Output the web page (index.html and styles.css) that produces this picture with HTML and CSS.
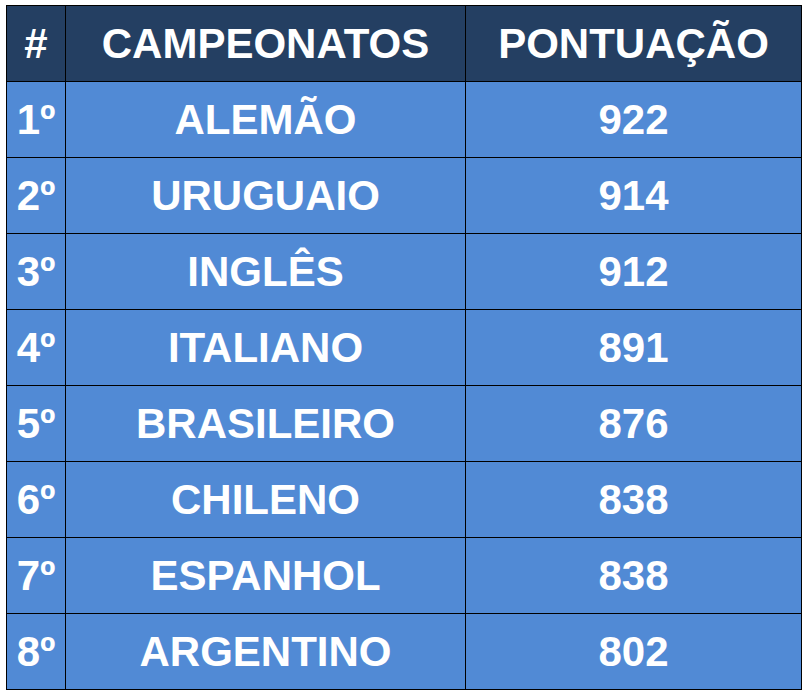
FILE: index.html
```html
<!DOCTYPE html>
<html lang="pt">
<head>
<meta charset="utf-8">
<title>Campeonatos</title>
<link rel="stylesheet" href="styles.css">
</head>
<body>
<table class="ranking">
  <colgroup>
    <col class="c-pos">
    <col class="c-name">
    <col class="c-score">
  </colgroup>
  <thead>
    <tr><th>#</th><th>CAMPEONATOS</th><th>PONTUAÇÃO</th></tr>
  </thead>
  <tbody>
    <tr><td>1º</td><td>ALEMÃO</td><td>922</td></tr>
    <tr><td>2º</td><td>URUGUAIO</td><td>914</td></tr>
    <tr><td>3º</td><td>INGLÊS</td><td>912</td></tr>
    <tr><td>4º</td><td>ITALIANO</td><td>891</td></tr>
    <tr><td>5º</td><td>BRASILEIRO</td><td>876</td></tr>
    <tr><td>6º</td><td>CHILENO</td><td>838</td></tr>
    <tr><td>7º</td><td>ESPANHOL</td><td>838</td></tr>
    <tr><td>8º</td><td>ARGENTINO</td><td>802</td></tr>
  </tbody>
</table>
</body>
</html>
```
FILE: styles.css
```css
html, body {
  margin: 0;
  background: #ffffff;
}
body {
  padding: 5px 0 0 6px;
}
.ranking {
  border-collapse: collapse;
  table-layout: fixed;
  width: 795px;
  font-family: "Liberation Sans", Arial, sans-serif;
  font-weight: bold;
  font-size: 42px;
  color: #ffffff;
}
.c-pos { width: 59px; }
.c-name { width: 400px; }
.c-score { width: 336px; }
.ranking th,
.ranking td {
  border: 1px solid #000000;
  height: 76px;
  padding: 0;
  text-align: center;
  vertical-align: middle;
  box-sizing: border-box;
  line-height: 1;
}
.ranking th {
  background: #243f62;
}
.ranking td {
  background: #518ad5;
}
```
